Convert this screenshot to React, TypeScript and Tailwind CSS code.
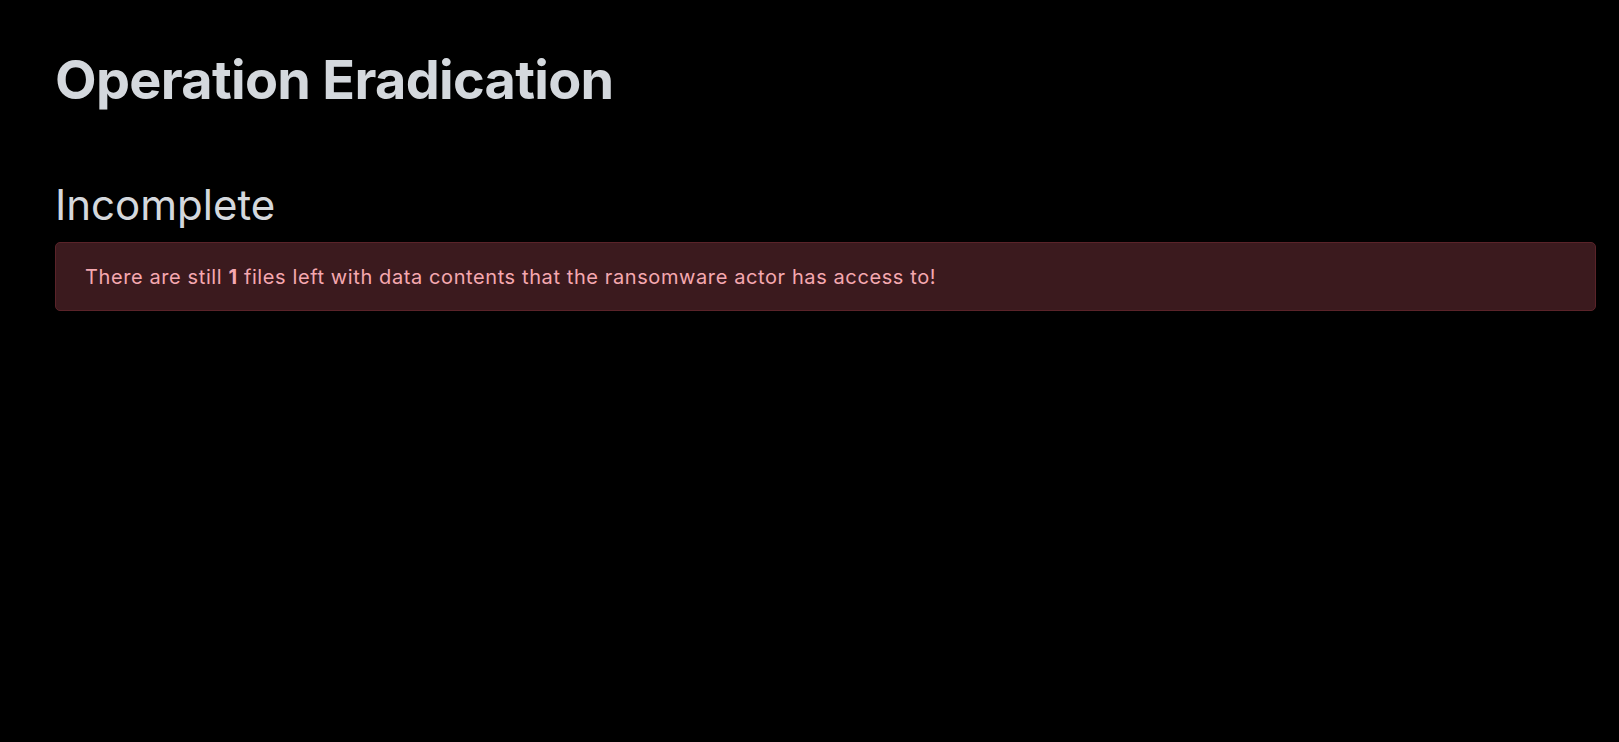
import React from 'react';

export default function App() {
  const remaining = 1;

  return (
    <div className="min-h-screen w-full bg-black font-['Inter','Liberation_Sans',sans-serif]">
      <div className="pl-[55px] pr-[23px] pt-[48px]">
        <h1 className="text-[54px] font-bold leading-[1.2] text-[#d4d8dd] tracking-[-0.7px]">Operation Eradication</h1>

        <h2 className="mt-[67px] text-[42px] font-normal leading-[1.2] text-[#d4d8dd]">Incomplete</h2>

        <div className="mt-[12px] h-[69px] flex items-center rounded-[5px] border border-[#5a2329] bg-[#3b1a1e] pl-[29px] text-[20px] tracking-[0.6px] text-[#f5a8b0]">
          <span>
            There are still <b className="font-bold">{remaining}</b> files left with data contents that the ransomware actor has access to!
          </span>
        </div>
      </div>
    </div>
  );
}
